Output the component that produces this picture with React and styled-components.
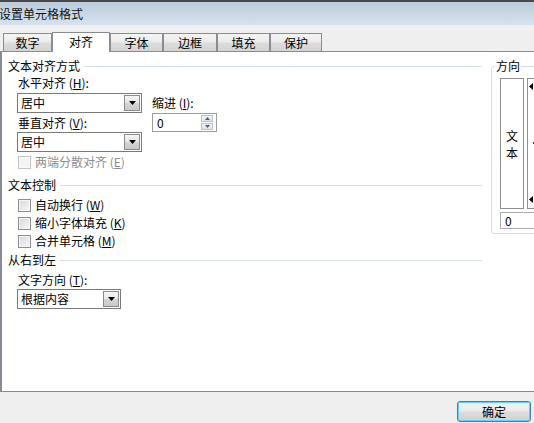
import React from "react";
import styled, { createGlobalStyle } from "styled-components";

const GlobalStyle = createGlobalStyle`
  html, body {
    margin: 0;
    padding: 0;
    background: #efefef;
  }
  body {
    font-family: "Noto Sans CJK SC", "Liberation Sans", sans-serif;
    font-size: 12px;
    color: #000;
  }
`;

const Window = styled.div`
  width: 534px;
  height: 423px;
  overflow: hidden;
  background: #efefef;
  display: flex;
  flex-direction: column;
`;

const TitleBar = styled.div`
  flex: none;
  height: 23px;
  border-top: 2px solid #4a4a4a;
  background: linear-gradient(#bccbda, #d5e2ef);
  display: flex;
  align-items: center;
  span {
    margin-left: -1px;
    line-height: 16px;
    color: #111;
  }
`;

const TabStrip = styled.div`
  flex: none;
  margin-top: 7px;
  height: 19px;
  border-bottom: 1px solid #898c95;
  padding-left: 3px;
  display: flex;
  align-items: flex-end;
`;

const Tab = styled.div`
  box-sizing: border-box;
  width: ${(p) => p.$w}px;
  height: ${(p) => (p.$active ? 20 : 18)}px;
  margin-bottom: ${(p) => (p.$active ? -1 : 0)}px;
  padding-bottom: ${(p) => (p.$active ? 2 : 0)}px;
  border: 1px solid #898c95;
  border-bottom: none;
  background: ${(p) =>
    p.$active
      ? "#fff"
      : "linear-gradient(#f5f5f5, #ebebeb 45%, #dcdcdc 55%, #d3d3d3)"};
  display: flex;
  align-items: center;
  justify-content: center;
  line-height: 14px;
`;

const Panel = styled.div`
  flex: none;
  box-sizing: border-box;
  width: 640px;
  height: 340px;
  background: #fff;
  border-left: 2px solid #898c95;
  border-bottom: 1px solid #898c95;
  padding: 6px 0 0 6px;
  display: flex;
  align-items: flex-start;
  gap: 9px;
`;

const LeftCol = styled.div`
  width: 474px;
  display: flex;
  flex-direction: column;
`;

const Heading = styled.div`
  display: flex;
  align-items: center;
  gap: 4px;
  height: 16px;
  line-height: 16px;
  margin-top: ${(p) => p.$mt || 0}px;
  &::after {
    content: "";
    flex: 1;
    height: 1px;
    background: #d5dfe5;
  }
`;

const Label = styled.div`
  height: 16px;
  line-height: 16px;
  padding-left: ${(p) => (p.$flush ? 0 : 10)}px;
  margin-top: ${(p) => p.$mt || 0}px;
  color: ${(p) => (p.$disabled ? "#8d8d8d" : "#000")};
  white-space: nowrap;
`;

const AlignRow = styled.div`
  display: flex;
  gap: 10px;
  margin-top: 1px;
`;

const AlignLeft = styled.div`
  display: flex;
  flex-direction: column;
`;

const AlignRight = styled.div`
  display: flex;
  flex-direction: column;
  padding-top: 20px;
`;

const Combo = styled.div`
  box-sizing: border-box;
  width: ${(p) => p.$w}px;
  height: 20px;
  margin-left: 9px;
  margin-top: ${(p) => p.$mt || 0}px;
  border: 1px solid #7a7a7a;
  display: flex;
  align-items: center;
  padding-left: 3px;
  padding-right: 1px;
  span {
    flex: 1;
    line-height: 16px;
  }
`;

const ArrowBtn = styled.div`
  box-sizing: border-box;
  width: 16px;
  height: 16px;
  border: 1px solid #8a8a8a;
  background: linear-gradient(#f6f6f6, #e6e6e6 50%, #d4d4d4 51%, #c9c9c9);
  display: flex;
  align-items: center;
  justify-content: center;
`;

const Spinner = styled.div`
  box-sizing: border-box;
  width: 65px;
  height: 19px;
  margin-top: 2px;
  border: 1px solid #9c9c9c;
  display: flex;
  align-items: center;
  padding: 0 3px 0 4px;
  span {
    flex: 1;
    line-height: 16px;
  }
`;

const SpinBtns = styled.div`
  display: flex;
  flex-direction: column;
  gap: 1px;
`;

const SpinBtn = styled.div`
  box-sizing: border-box;
  width: 12px;
  height: 7px;
  border: 1px solid #b7c3d3;
  background: linear-gradient(#f3f6fa, #dbe3ee);
  display: flex;
  align-items: center;
  justify-content: center;
`;

const CheckRow = styled.div`
  display: flex;
  align-items: center;
  gap: 4px;
  height: ${(p) => p.$h || 18}px;
  padding-left: 10px;
  margin-top: ${(p) => p.$mt || 0}px;
  color: ${(p) => (p.$disabled ? "#8d8d8d" : "#000")};
  span {
    line-height: 16px;
  }
`;

const CheckBox = styled.div`
  box-sizing: border-box;
  width: 13px;
  height: 13px;
  border: 1px solid ${(p) => (p.$disabled ? "#c4c4c4" : "#8e8f8f")};
  background: ${(p) =>
    p.$disabled ? "#f4f4f4" : "linear-gradient(135deg, #d7d7d7, #f9f9f9)"};
  box-shadow: inset 0 0 0 1px ${(p) => (p.$disabled ? "#fafafa" : "#f4f4f4")};
`;

const DirGroup = styled.div`
  position: relative;
  box-sizing: border-box;
  width: 130px;
  margin-top: 8px;
  border: 1px solid #d5dfe5;
  border-radius: 3px;
  padding: 11px 0 4px 8px;
  display: flex;
  flex-direction: column;
  gap: 3px;
`;

const Legend = styled.span`
  position: absolute;
  top: -9px;
  left: 3px;
  padding: 0 1px;
  line-height: 16px;
  background: #fff;
`;

const DirRow = styled.div`
  display: flex;
  gap: 3px;
`;

const VertBox = styled.div`
  box-sizing: border-box;
  width: 24px;
  height: 131px;
  border: 1px solid #8f8f8f;
  display: flex;
  flex-direction: column;
  align-items: center;
  justify-content: center;
  span {
    display: block;
    height: 17px;
    line-height: 17px;
  }
`;

const DialBox = styled.div`
  box-sizing: border-box;
  width: 90px;
  height: 131px;
  border: 1px solid #8f8f8f;
  display: flex;
  flex-direction: column;
  justify-content: space-between;
  padding: 4px 0 5px 1px;
`;

const DialMark = styled.div`
  width: 3px;
  height: 2px;
  margin-left: 4px;
  background: #333;
`;

const DegreeField = styled.div`
  box-sizing: border-box;
  width: 100px;
  height: 17px;
  border: 1px solid #abadb3;
  padding-left: 4px;
  line-height: 15px;
`;

const Footer = styled.div`
  flex: 1;
  display: flex;
  justify-content: flex-end;
  align-items: flex-start;
  padding: 9px 3px 0 0;
`;

const Button = styled.div`
  box-sizing: border-box;
  width: 74px;
  height: 21px;
  border: 1px solid #3c7fb1;
  border-radius: 3px;
  box-shadow: inset 0 0 0 1px #5fd4f7;
  background: linear-gradient(#f2f2f2, #ebebeb 48%, #dddddd 52%, #cfcfcf);
  display: flex;
  align-items: center;
  justify-content: center;
  line-height: 16px;
`;

const DownArrow = () => (
  <svg width="7" height="4" viewBox="0 0 7 4">
    <path d="M0 0h7L3.5 4z" fill="#000" />
  </svg>
);

const SmallArrow = ({ up }) => (
  <svg width="5" height="3" viewBox="0 0 5 3">
    <path d={up ? "M0 3h5L2.5 0z" : "M0 0h5L2.5 3z"} fill="#4d6185" />
  </svg>
);

const LeftArrow = () => (
  <svg width="4" height="7" viewBox="0 0 4 7">
    <path d="M4 0v7L0 3.5z" fill="#000" />
  </svg>
);

const Acc = ({ k }) => (
  <>
    {" ("}
    <u>{k}</u>
    {")"}
  </>
);

const tabs = [
  { t: "数字", w: 49 },
  { t: "对齐", w: 58, active: true },
  { t: "字体", w: 53 },
  { t: "边框", w: 54 },
  { t: "填充", w: 53 },
  { t: "保护", w: 52 },
];

const Check = ({ children, disabled, mt, h }) => (
  <CheckRow $disabled={disabled} $mt={mt} $h={h}>
    <CheckBox $disabled={disabled} />
    <span>{children}</span>
  </CheckRow>
);

export default function App() {
  return (
    <>
      <GlobalStyle />
      <Window>
        <TitleBar>
          <span>设置单元格格式</span>
        </TitleBar>
        <TabStrip>
          {tabs.map((tab) => (
            <Tab key={tab.t} $w={tab.w} $active={tab.active}>
              {tab.t}
            </Tab>
          ))}
        </TabStrip>
        <Panel>
          <LeftCol>
            <Heading>文本对齐方式</Heading>
            <AlignRow>
              <AlignLeft>
                <Label>
                  水平对齐
                  <Acc k="H" />:
                </Label>
                <Combo $w={125} $mt={2}>
                  <span>居中</span>
                  <ArrowBtn>
                    <DownArrow />
                  </ArrowBtn>
                </Combo>
                <Label $mt={2}>
                  垂直对齐
                  <Acc k="V" />:
                </Label>
                <Combo $w={125} $mt={1}>
                  <span>居中</span>
                  <ArrowBtn>
                    <DownArrow />
                  </ArrowBtn>
                </Combo>
                <Check disabled mt={2} h={16}>
                  两端分散对齐
                  <Acc k="E" />
                </Check>
              </AlignLeft>
              <AlignRight>
                <Label $flush>
                  缩进
                  <Acc k="I" />:
                </Label>
                <Spinner>
                  <span>0</span>
                  <SpinBtns>
                    <SpinBtn>
                      <SmallArrow up />
                    </SpinBtn>
                    <SpinBtn>
                      <SmallArrow />
                    </SpinBtn>
                  </SpinBtns>
                </Spinner>
              </AlignRight>
            </AlignRow>

            <Heading $mt={7}>文本控制</Heading>
            <Check mt={3}>
              自动换行
              <Acc k="W" />
            </Check>
            <Check>
              缩小字体填充
              <Acc k="K" />
            </Check>
            <Check>
              合并单元格
              <Acc k="M" />
            </Check>

            <Heading $mt={2}>从右到左</Heading>
            <Label $mt={4}>
              文字方向
              <Acc k="T" />:
            </Label>
            <Combo $w={104} $mt={1}>
              <span>根据内容</span>
              <ArrowBtn>
                <DownArrow />
              </ArrowBtn>
            </Combo>
          </LeftCol>

          <DirGroup>
            <Legend>方向</Legend>
            <DirRow>
              <VertBox>
                <span>文</span>
                <span>本</span>
              </VertBox>
              <DialBox>
                <LeftArrow />
                <DialMark />
                <LeftArrow />
              </DialBox>
            </DirRow>
            <DegreeField>0</DegreeField>
          </DirGroup>
        </Panel>
        <Footer>
          <Button>确定</Button>
        </Footer>
      </Window>
    </>
  );
}
